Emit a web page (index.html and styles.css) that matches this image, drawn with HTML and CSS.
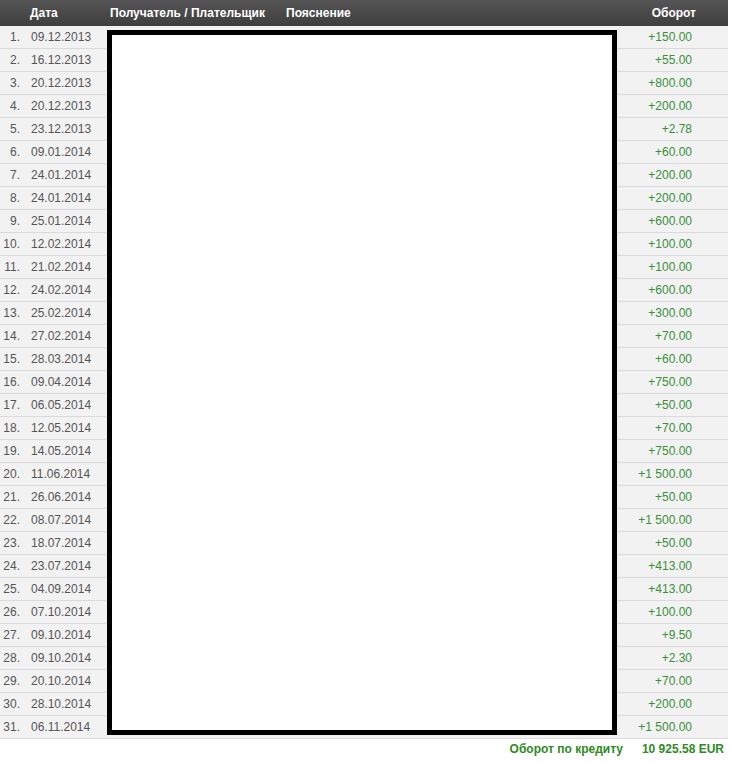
FILE: index.html
```html
<!DOCTYPE html>
<html lang="ru">
<head>
    <meta charset="UTF-8">
    <title>Выписка по счёту</title>
    <link rel="stylesheet" href="styles.css">
</head>
<body>
    <div class="statement">
        <table class="turnover-table">
            <colgroup>
                <col class="col-num">
                <col class="col-date">
                <col class="col-party">
                <col class="col-note">
                <col class="col-amount">
            </colgroup>
            <thead>
                <tr>
                    <th class="num"></th>
                    <th>Дата</th>
                    <th>Получатель / Плательщик</th>
                    <th>Пояснение</th>
                    <th class="amount">Оборот</th>
                </tr>
            </thead>
            <tbody>
                <tr><td class="num">1.</td><td>09.12.2013</td><td></td><td></td><td class="amount">+150.00</td></tr>
                <tr><td class="num">2.</td><td>16.12.2013</td><td></td><td></td><td class="amount">+55.00</td></tr>
                <tr><td class="num">3.</td><td>20.12.2013</td><td></td><td></td><td class="amount">+800.00</td></tr>
                <tr><td class="num">4.</td><td>20.12.2013</td><td></td><td></td><td class="amount">+200.00</td></tr>
                <tr><td class="num">5.</td><td>23.12.2013</td><td></td><td></td><td class="amount">+2.78</td></tr>
                <tr><td class="num">6.</td><td>09.01.2014</td><td></td><td></td><td class="amount">+60.00</td></tr>
                <tr><td class="num">7.</td><td>24.01.2014</td><td></td><td></td><td class="amount">+200.00</td></tr>
                <tr><td class="num">8.</td><td>24.01.2014</td><td></td><td></td><td class="amount">+200.00</td></tr>
                <tr><td class="num">9.</td><td>25.01.2014</td><td></td><td></td><td class="amount">+600.00</td></tr>
                <tr><td class="num">10.</td><td>12.02.2014</td><td></td><td></td><td class="amount">+100.00</td></tr>
                <tr><td class="num">11.</td><td>21.02.2014</td><td></td><td></td><td class="amount">+100.00</td></tr>
                <tr><td class="num">12.</td><td>24.02.2014</td><td></td><td></td><td class="amount">+600.00</td></tr>
                <tr><td class="num">13.</td><td>25.02.2014</td><td></td><td></td><td class="amount">+300.00</td></tr>
                <tr><td class="num">14.</td><td>27.02.2014</td><td></td><td></td><td class="amount">+70.00</td></tr>
                <tr><td class="num">15.</td><td>28.03.2014</td><td></td><td></td><td class="amount">+60.00</td></tr>
                <tr><td class="num">16.</td><td>09.04.2014</td><td></td><td></td><td class="amount">+750.00</td></tr>
                <tr><td class="num">17.</td><td>06.05.2014</td><td></td><td></td><td class="amount">+50.00</td></tr>
                <tr><td class="num">18.</td><td>12.05.2014</td><td></td><td></td><td class="amount">+70.00</td></tr>
                <tr><td class="num">19.</td><td>14.05.2014</td><td></td><td></td><td class="amount">+750.00</td></tr>
                <tr><td class="num">20.</td><td>11.06.2014</td><td></td><td></td><td class="amount">+1 500.00</td></tr>
                <tr><td class="num">21.</td><td>26.06.2014</td><td></td><td></td><td class="amount">+50.00</td></tr>
                <tr><td class="num">22.</td><td>08.07.2014</td><td></td><td></td><td class="amount">+1 500.00</td></tr>
                <tr><td class="num">23.</td><td>18.07.2014</td><td></td><td></td><td class="amount">+50.00</td></tr>
                <tr><td class="num">24.</td><td>23.07.2014</td><td></td><td></td><td class="amount">+413.00</td></tr>
                <tr><td class="num">25.</td><td>04.09.2014</td><td></td><td></td><td class="amount">+413.00</td></tr>
                <tr><td class="num">26.</td><td>07.10.2014</td><td></td><td></td><td class="amount">+100.00</td></tr>
                <tr><td class="num">27.</td><td>09.10.2014</td><td></td><td></td><td class="amount">+9.50</td></tr>
                <tr><td class="num">28.</td><td>09.10.2014</td><td></td><td></td><td class="amount">+2.30</td></tr>
                <tr><td class="num">29.</td><td>20.10.2014</td><td></td><td></td><td class="amount">+70.00</td></tr>
                <tr><td class="num">30.</td><td>28.10.2014</td><td></td><td></td><td class="amount">+200.00</td></tr>
                <tr><td class="num">31.</td><td>06.11.2014</td><td></td><td></td><td class="amount">+1 500.00</td></tr>
            </tbody>
            <tfoot>
                <tr>
                    <td colspan="4" class="total-label">Оборот по кредиту</td>
                    <td class="total-value">10 925.58 EUR</td>
                </tr>
            </tfoot>
        </table>
        <!-- redacted area over the party / note columns -->
        <div class="redaction"></div>
    </div>
</body>
</html>
```

FILE: styles.css
```css
html, body {
    margin: 0;
    padding: 0;
    background-color: #fff;
    font-family: "Liberation Sans", Arial, sans-serif;
    font-size: 12px;
}
.statement {
    position: relative;
    width: 728px;
}
.turnover-table {
    width: 728px;
    table-layout: fixed;
    border-collapse: collapse;
}
.col-num { width: 25px; }
.col-date { width: 80px; }
.col-party { width: 176px; }
.col-note { width: 349px; }
.col-amount { width: 98px; }
.turnover-table th {
    height: 26px;
    padding: 0 5px;
    text-align: left;
    font-weight: bold;
    color: #fff;
    background: linear-gradient(#555555, #3e3e3e);
}
.turnover-table th.amount {
    text-align: right;
    padding-right: 32px;
}
.turnover-table td {
    height: 22px;
    padding: 0 6px;
    color: #555;
    background-color: #f2f2f2;
    border-bottom: 1px solid #dadada;
    white-space: nowrap;
}
.turnover-table td.num {
    text-align: right;
    padding: 0 5px 0 0;
}
.turnover-table td.amount {
    text-align: right;
    padding-right: 36px;
    color: #3a8f3a;
}
.turnover-table tfoot td {
    height: 20px;
    background-color: #fff;
    border-bottom: none;
    font-weight: bold;
    color: #2f8a1f;
    text-align: right;
}
.turnover-table td.total-label {
    padding-right: 7px;
}
.turnover-table td.total-value {
    padding-right: 4px;
}
.redaction {
    position: absolute;
    top: 30px;
    left: 107px;
    width: 510px;
    height: 705px;
    box-sizing: border-box;
    border: 5px solid #000;
    background-color: #fff;
}
```
